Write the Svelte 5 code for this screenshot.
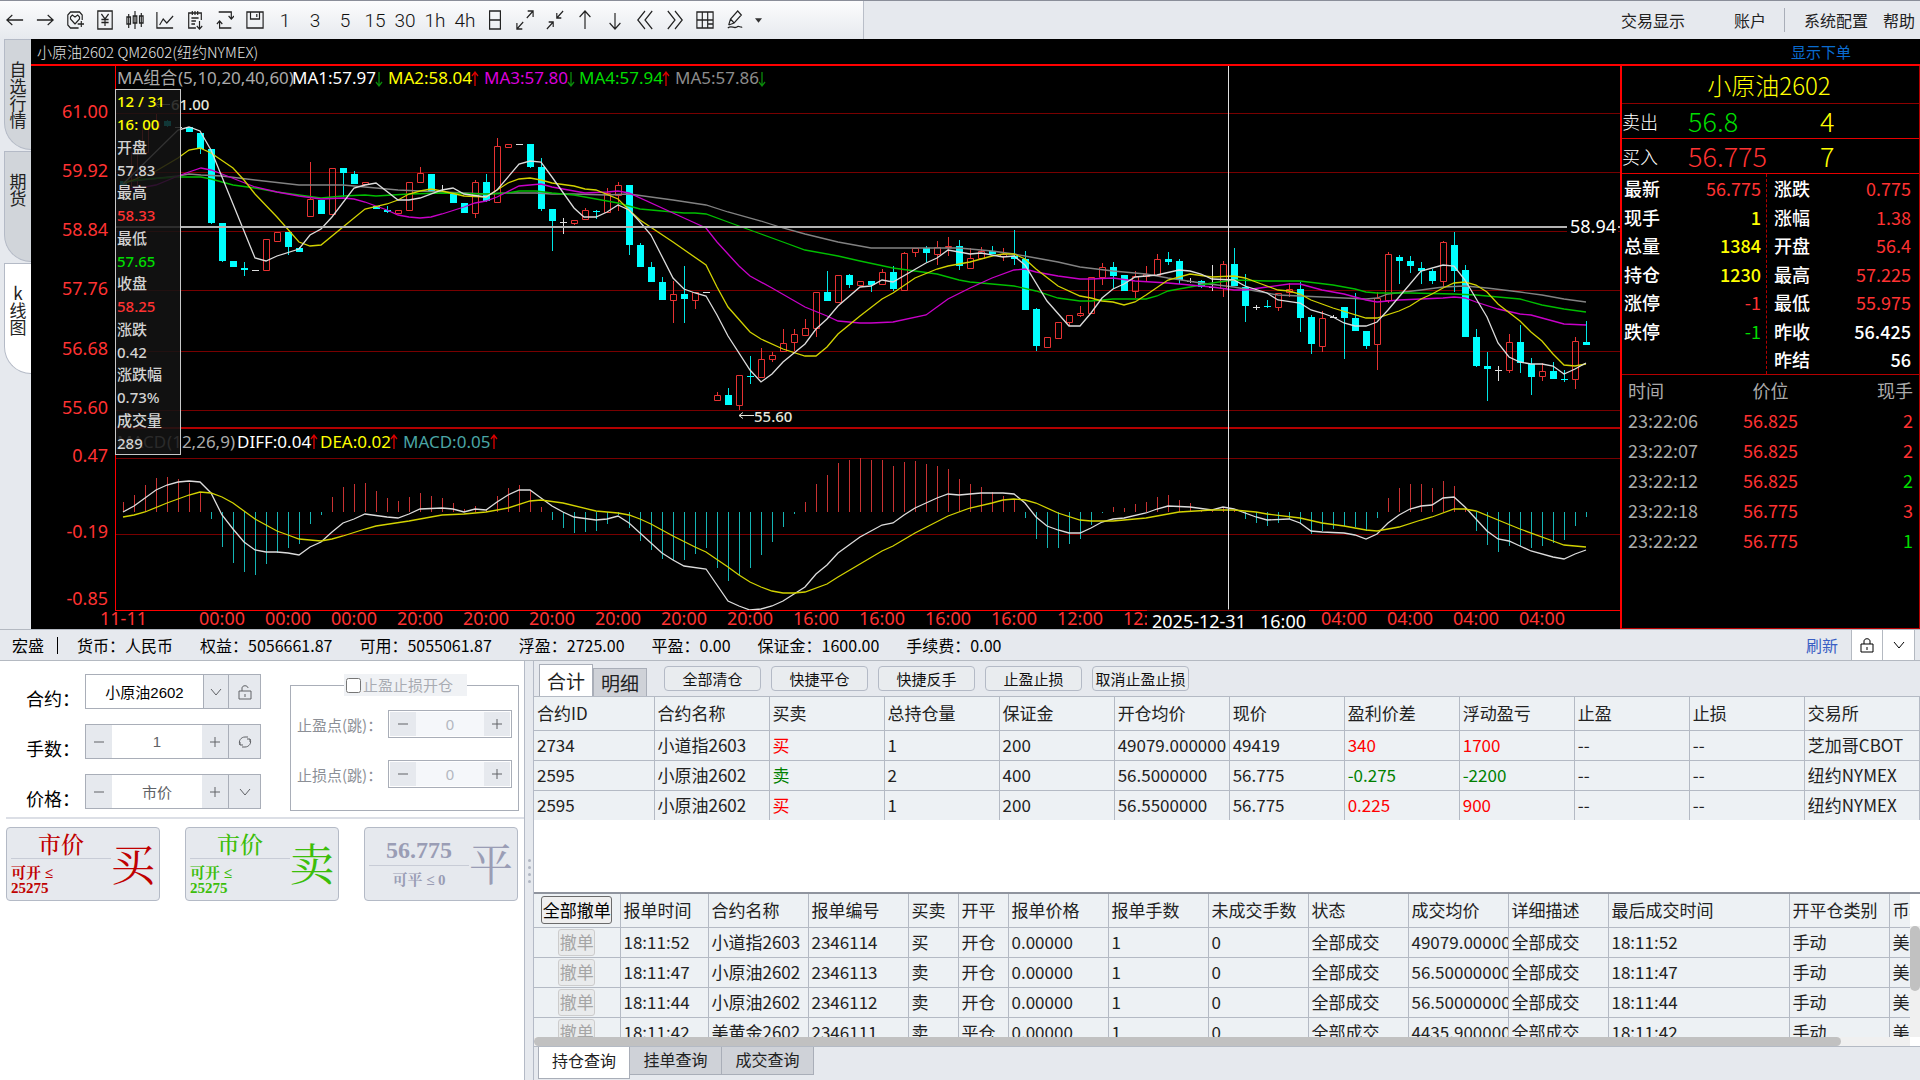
<script>
    // --- 顶部工具栏 ---
    const tools = [
        { name: '后退', d: 'M1 10H19M7 5L1 10L7 15' },
        { name: '前进', d: 'M1 10H19M13 5L19 10L13 15' },
        { name: '加自选', d: 'M14 18H5L2 15V5L5 2H15L18 5V10M10 14L5 9V7L7 5L10 7L13 5L15 7V9L10 14M13 14H20M17 11V17' },
        { name: '交易', d: 'M2 1H18V19H2ZM6 4L10 9L14 4M10 9V16M6 9.5H14M6 12.5H14' },
        { name: 'K线', d: 'M3 4V18M1 7H5V14H1ZM10 1V19M8 6H12V13H8ZM17 3V17M15 6H19V13H15Z' },
        { name: '分时', d: 'M1 2V18H19M4 15L8 9L12 13L19 6' },
        { name: '明细', d: 'M11 18H3V3H17V10M7 1V5M10 1V5M13 1V5M6 8H14M6 11H11M6 14H10M15 11V19M12 16L15 19L18 16' },
        { name: '切换', d: 'M3 2H17V9M14 6L17 9L20 6M17 18H4V11M1 14L4 11L7 14' },
        { name: '保存', d: 'M1 2H19V18H1ZM5 2V9H15V2M12 4V7' },
        { label: '1' },
        { label: '3' },
        { label: '5' },
        { label: '15' },
        { label: '30' },
        { label: '1h' },
        { label: '4h' },
        { name: '日线', d: 'M4 1H16V19H4ZM4 10H16' },
        { name: '放大', d: 'M12 8L19 1M13 1H19V7M8 12L1 19M1 13V19H7' },
        { name: '缩小', d: 'M12 8L19 1M12 3V8H17M8 12L1 19M3 12H8V17' },
        { name: '上移', d: 'M10 19V1M4 7L10 1L16 7' },
        { name: '下移', d: 'M10 3V19M4 13L10 19L16 13' },
        { name: '向左', d: 'M10 1L2 10L10 19M18 1L10 10L18 19' },
        { name: '向右', d: 'M2 1L10 10L2 19M10 1L18 10L10 19' },
        { name: '布局', d: 'M1 2H19V18H1ZM7 2V18M13 2V18M1 10H19M13 14H19' },
        { name: '画线', d: 'M3 15L5 9L13 1L17 5L9 13L3 15M5 9L9 13M2 18C6 15 9 19 12 17C14 15 16 18 18 17' }
    ];

    // --- K线数据: [类型 u涨 d跌 f平, 最高, 实体上, 实体下, 最低] ---
    const candles = [
        ['d',181,181,186,186],['u',152,152,186,190],['u',127,127,152,154],['u',114,121,127,127],['d',120,121,126,127],
        ['f',127,127,127,127],['d',127,127,132,132],['d',133,133,149,154],['d',149,149,223,224],['d',223,223,261,262],
        ['d',261,261,267,267],['d',262,268,270,276],['f',270,270,270,270],['u',239,239,270,270],['u',232,232,241,241],
        ['d',232,232,247,255],['d',247,248,252,252],['u',162,199,216,216],['d',200,200,214,214],['u',168,168,214,215],
        ['d',168,168,173,197],['d',171,174,184,184],['u',182,182,184,184],['d',206,206,209,209],['d',206,210,212,213],
        ['u',210,210,213,214],['u',182,182,210,210],['u',167,173,182,182],['d',174,174,192,192],['f',185,191,191,191],
        ['d',193,193,203,203],['d',203,203,213,213],['u',180,182,213,218],['d',174,182,201,202],['u',138,146,202,202],
        ['u',144,144,147,147],['f',144,144,144,144],['d',144,144,167,168],['d',158,167,209,211],['d',209,209,221,251],
        ['f',218,222,222,234],['u',220,220,223,225],['u',208,210,219,219],['d',210,211,212,219],['u',188,193,212,213],
        ['u',182,185,195,211],['d',185,185,245,255],['d',243,245,267,267],['d',262,267,282,282],['d',277,282,300,300],
        ['u',281,294,300,323],['d',266,294,299,323],['u',292,292,300,309],['f',292,292,292,292],['u',392,395,400,400],
        ['d',388,395,405,405],['u',375,375,405,410],['d',356,376,377,384],['u',348,359,377,377],['u',352,355,359,362],
        ['u',329,343,351,351],['u',329,334,342,351],['u',319,328,335,335],['u',292,292,328,337],['d',271,292,301,301],
        ['u',275,275,302,302],['d',274,275,285,288],['u',281,281,285,286],['d',281,281,285,292],['u',269,272,284,284],
        ['d',266,272,289,291],['u',252,253,290,291],['u',248,248,252,257],['d',246,248,253,262],['u',241,247,254,265],
        ['u',237,246,247,256],['d',240,246,266,270],['u',248,258,268,268],['u',247,251,258,258],['d',246,251,254,254],
        ['u',248,254,256,261],['d',230,256,259,265],['d',251,259,310,310],['d',308,309,346,351],['u',337,337,347,348],
        ['u',322,322,338,338],['u',315,315,322,326],['u',306,313,315,317],['u',277,277,313,313],['u',263,267,277,285],
        ['d',262,267,276,289],['d',275,275,291,291],['u',271,276,291,298],['u',266,274,276,282],['u',254,259,275,275],
        ['d',252,259,262,265],['d',259,261,280,284],['f',278,281,281,283],['d',280,281,287,288],['f',265,287,287,291],
        ['u',261,264,288,297],['d',248,264,286,286],['d',274,287,306,322],['f',305,307,307,310],['d',300,306,307,308],
        ['u',293,293,307,311],['u',283,289,292,297],['d',282,289,318,332],['d',315,317,344,354],['u',311,318,346,352],
        ['f',315,317,317,318],['d',307,307,318,359],['d',293,318,331,331],['d',331,331,346,349],['u',292,298,344,370],
        ['u',252,254,300,303],['d',255,257,261,284],['d',256,261,266,273],['d',262,268,271,284],['d',269,271,281,284],
        ['u',241,242,281,287],['d',232,245,271,292],['d',265,270,337,337],['d',329,337,366,367],['d',352,366,369,401],
        ['f',366,370,370,381],['u',334,342,370,373],['d',325,342,363,373],['d',358,364,377,395],['u',363,371,376,381],
        ['d',362,371,379,379],['d',370,379,380,382],['u',337,341,379,389],['d',321,342,345,345]
    ];

    // --- 均线 ---
    const averages = [
        { cls: 'ma5', pts: '123,182 178,176 189,174 201,175 222,176 255,180 299,185 343,185 365,187 398,190 420,191 464,193 486,194 508,193 536,193 552,194 574,194 607,195 629,194 673,200 706,205 728,212 761,221 783,228 805,234 838,242 860,246 871,248 904,248 926,248 959,248 992,251 1014,254 1036,258 1058,262 1080,267 1113,271 1146,274 1168,278 1201,283 1234,287 1256,291 1278,295 1300,296 1322,297 1344,298 1366,299 1377,298 1388,294 1421,290 1443,287 1465,286 1487,288 1520,292 1542,295 1564,299 1586,302' },
        { cls: 'ma4', pts: '123,182 145,179 178,177 189,177 201,177 211,179 233,185 255,188 277,192 299,195 321,198 343,196 365,195 376,196 409,194 442,193 486,194 508,193 519,191 536,191 552,193 574,195 596,199 618,203 640,209 662,211 684,213 695,213 706,214 728,222 761,234 783,242 805,250 838,256 860,261 893,268 915,271 937,274 959,280 970,282 992,284 1014,286 1036,291 1058,298 1080,301 1091,301 1113,299 1146,299 1157,296 1168,291 1190,287 1212,283 1234,280 1267,281 1300,281 1333,285 1355,289 1366,292 1377,293 1410,293 1454,294 1476,295 1509,298 1520,299 1542,305 1564,309 1586,312' },
        { cls: 'ma3', pts: '123,190 145,187 156,185 178,176 189,172 201,168 211,170 222,174 255,187 277,192 299,196 321,199 343,198 354,199 365,202 387,210 398,215 409,217 420,218 431,217 442,214 464,207 475,203 486,201 497,197 519,186 530,185 541,184 552,187 574,191 585,193 607,192 618,191 629,193 673,213 695,223 706,228 717,242 728,254 739,266 750,276 772,288 805,307 827,316 838,321 860,323 871,323 893,322 926,315 937,307 948,299 970,288 992,278 1014,270 1025,269 1036,272 1058,276 1080,279 1091,279 1113,278 1135,281 1168,283 1190,285 1212,287 1234,290 1245,290 1267,287 1289,284 1300,284 1322,290 1344,294 1366,300 1377,302 1399,300 1443,298 1454,297 1465,298 1476,302 1498,309 1520,314 1531,315 1542,318 1564,324 1586,325' },
        { cls: 'ma2', pts: '123,184 156,171 178,158 189,150 200,148 211,153 233,168 244,180 255,194 277,217 299,242 310,246 321,245 343,227 365,209 387,204 398,200 409,194 420,191 431,189 442,191 464,196 486,197 497,190 508,183 519,179 530,178 541,180 552,183 574,186 585,189 596,190 618,199 629,210 640,220 673,242 706,265 717,287 728,307 750,332 761,339 783,349 805,356 816,356 827,347 838,334 860,316 882,299 893,293 915,278 937,269 948,266 970,262 992,256 1003,254 1014,254 1025,259 1036,269 1058,286 1080,296 1091,298 1102,301 1113,302 1124,305 1135,302 1146,295 1168,280 1190,274 1212,277 1234,276 1245,278 1256,282 1278,290 1289,291 1300,294 1311,300 1333,308 1366,318 1377,318 1399,311 1410,306 1421,299 1432,294 1443,288 1454,283 1465,282 1476,285 1487,292 1498,304 1520,321 1531,332 1542,341 1553,354 1564,365 1575,366 1586,364' },
        { cls: 'ma1', pts: '123,184 178,130 189,127 200,131 211,150 255,258 266,261 277,256 299,249 310,235 321,229 332,217 354,188 365,185 376,183 398,200 409,200 420,198 442,190 453,188 464,194 486,197 497,190 519,164 530,161 541,162 552,177 574,208 584,217 596,217 607,212 618,205 629,210 640,222 651,235 673,278 684,289 695,293 706,296 717,315 728,336 750,370 761,382 772,374 783,362 794,353 805,344 816,329 827,319 838,306 860,287 871,286 882,280 893,282 926,263 937,258 948,250 970,254 981,253 1003,257 1014,256 1025,265 1047,301 1069,326 1080,326 1091,313 1102,298 1113,289 1124,284 1135,277 1157,275 1179,270 1190,271 1201,274 1212,279 1234,280 1245,286 1267,293 1278,300 1300,303 1311,310 1322,313 1333,317 1344,323 1355,326 1366,326 1377,322 1388,310 1399,297 1421,271 1443,265 1454,266 1465,280 1487,317 1498,343 1509,357 1520,362 1531,364 1542,364 1553,366 1564,374 1575,369 1586,363' }
    ];

    // --- MACD ---
    const macdZero = 512;
    const macd = [
        502,495,485,478,477,479,483,492,519,547,563,572,575,564,553,548,544,524,515,497,
        487,484,483,491,498,501,497,493,496,498,503,509,506,509,496,488,485,491,507,520,
        528,533,532,531,524,515,528,541,550,559,560,560,554,548,568,581,575,568,555,542,
        527,514,502,484,475,463,460,458,460,460,466,462,461,464,466,469,479,484,487,492,
        496,500,518,539,548,548,544,539,525,513,507,508,504,502,497,495,500,503,511,511,
        507,510,519,523,526,523,519,523,534,531,529,526,527,531,518,498,488,484,484,488,
        481,486,507,531,545,552,546,546,548,546,543,540,526,517
    ];
    const diffLine = '123,512 134,506 156,490 167,485 178,482 189,481 200,482 211,493 222,515 233,529 244,542 255,550 266,552 277,552 288,553 299,555 310,547 321,542 332,532 343,523 354,519 365,514 387,517 398,518 409,514 420,509 442,508 453,509 464,512 475,509 486,510 497,502 508,495 519,490 530,490 541,498 552,506 563,512 574,517 596,520 607,519 618,516 629,523 640,533 662,553 673,560 684,566 706,569 717,585 728,601 739,606 750,610 761,609 772,606 783,601 794,594 805,587 816,574 827,565 838,553 849,545 860,537 882,525 893,523 904,515 915,508 937,498 948,494 959,495 981,493 1003,493 1014,494 1025,503 1036,517 1047,526 1058,530 1069,533 1080,533 1091,528 1102,522 1113,519 1124,518 1146,513 1157,509 1168,506 1190,507 1212,510 1223,507 1234,509 1256,517 1267,520 1289,519 1300,523 1311,531 1322,532 1344,533 1355,535 1366,539 1377,534 1388,523 1399,515 1410,509 1421,506 1432,505 1443,498 1454,497 1465,507 1476,519 1487,531 1498,539 1509,541 1520,546 1531,551 1553,557 1564,559 1575,554 1586,550';
    const deaLine = '123,517 134,515 145,512 167,503 189,495 200,492 211,493 222,497 233,503 244,511 255,519 277,531 288,535 299,539 321,541 332,539 343,536 365,529 376,526 409,521 431,517 442,515 464,514 486,512 508,508 530,501 541,500 563,503 596,511 618,513 629,515 640,519 651,524 673,536 695,547 706,552 728,567 739,575 750,582 761,587 772,591 783,593 794,593 805,592 827,584 838,577 860,564 882,551 893,546 915,533 948,516 970,508 992,503 1003,500 1014,499 1025,500 1036,503 1058,513 1080,520 1091,521 1113,521 1135,519 1146,518 1179,512 1212,510 1234,510 1256,512 1267,514 1300,518 1322,523 1344,526 1366,530 1377,531 1388,529 1399,527 1421,520 1432,517 1454,509 1465,509 1476,511 1498,520 1520,529 1553,541 1564,545 1575,546 1586,547';

    const priceTicks = [['61.00', 113], ['59.92', 172], ['58.84', 231], ['57.76', 290], ['56.68', 350], ['55.60', 409]];
    const macdTicks = [['0.47', 457], ['-0.19', 533], ['-0.85', 600]];
    const timeTicks = ['00:00', '00:00', '00:00', '20:00', '20:00', '20:00', '20:00', '20:00', '20:00', '16:00', '16:00', '16:00', '16:00', '12:00', '', '', '', '04:00', '04:00', '04:00', '04:00'];

    const maLegend = [
        ['MA1:57.97', 'ma1', 292, 'down'],
        ['MA2:58.04', 'ma2', 388, 'up'],
        ['MA3:57.80', 'ma3', 484, 'down'],
        ['MA4:57.94', 'ma4', 579, 'up'],
        ['MA5:57.86', 'ma5', 675, 'down']
    ];
    const macdLegend = [
        ['DIFF:0.04', 'ma1', 237, 314],
        ['DEA:0.02', 'ma2', 320, 394],
        ['MACD:0.05', 'teal', 403, 494]
    ];

    const barX = (i) => 123 + i * 11;

    const barInfo = [
        ['12 / 31', 'yellow'], ['16: 00', 'yellow'], ['开盘', ''], ['57.83', ''], ['最高', ''], ['58.33', 'red'],
        ['最低', ''], ['57.65', 'green'], ['收盘', ''], ['58.25', 'red'], ['涨跌', ''], ['0.42', ''],
        ['涨跌幅', ''], ['0.73%', ''], ['成交量', ''], ['289', '']
    ];

    // --- 行情面板 ---
    const quotesLeft = [['最新', '56.775', 'red'], ['现手', '1', 'yellow'], ['总量', '1384', 'yellow'], ['持仓', '1230', 'yellow'], ['涨停', '-1', 'red'], ['跌停', '-1', 'green']];
    const quotesRight = [['涨跌', '0.775', 'red'], ['涨幅', '1.38', 'red'], ['开盘', '56.4', 'red'], ['最高', '57.225', 'red'], ['最低', '55.975', 'red'], ['昨收', '56.425', ''], ['昨结', '56', '']];
    const ticks = [
        ['23:22:06', '56.825', '2', 'red'],
        ['23:22:07', '56.825', '2', 'red'],
        ['23:22:12', '56.825', '2', 'green'],
        ['23:22:18', '56.775', '3', 'red'],
        ['23:22:22', '56.775', '1', 'green']
    ];

    // --- 账户资金 ---
    const funds = ['货币：人民币', '权益：5056661.87', '可用：5055061.87', '浮盈：2725.00', '平盈：0.00', '保证金：1600.00', '手续费：0.00'];

    // --- 下单 ---
    let contract = $state('小原油2602');
    let lots = $state(1);
    let price = $state('市价');
    let stopOpen = $state(false);

    // --- 持仓 ---
    let view = $state('合计');
    const quickActions = ['全部清仓', '快捷平仓', '快捷反手', '止盈止损', '取消止盈止损'];
    const positionCols = ['合约ID', '合约名称', '买卖', '总持仓量', '保证金', '开仓均价', '现价', '盈利价差', '浮动盈亏', '止盈', '止损', '交易所'];
    const positions = [
        ['2734', '小道指2603', '买', '1', '200', '49079.000000', '49419', '340', '1700', '--', '--', '芝加哥CBOT'],
        ['2595', '小原油2602', '卖', '2', '400', '56.5000000', '56.775', '-0.275', '-2200', '--', '--', '纽约NYMEX'],
        ['2595', '小原油2602', '买', '1', '200', '56.5500000', '56.775', '0.225', '900', '--', '--', '纽约NYMEX']
    ];

    function cellClass(row, i) {
        if (i === 2) return row[2] === '买' ? 'rise' : 'fall';
        if (i === 7 || i === 8) return row[i].startsWith('-') ? 'fall' : 'rise';
        return '';
    }

    // --- 委托 ---
    const orderCols = [
        ['报单时间', 88], ['合约名称', 100], ['报单编号', 100], ['买卖', 50], ['开平', 50], ['报单价格', 100], ['报单手数', 100],
        ['未成交手数', 100], ['状态', 100], ['成交均价', 100], ['详细描述', 100], ['最后成交时间', 181], ['开平仓类别', 100], ['币种', 100]
    ];
    const orders = [
        ['18:11:52', '小道指2603', '2346114', '买', '开仓', '0.00000', '1', '0', '全部成交', '49079.000000', '全部成交', '18:11:52', '手动', '美元'],
        ['18:11:47', '小原油2602', '2346113', '卖', '开仓', '0.00000', '1', '0', '全部成交', '56.50000000', '全部成交', '18:11:47', '手动', '美元'],
        ['18:11:44', '小原油2602', '2346112', '卖', '开仓', '0.00000', '1', '0', '全部成交', '56.50000000', '全部成交', '18:11:44', '手动', '美元'],
        ['18:11:42', '美黄金2602', '2346111', '卖', '平仓', '0.00000', '1', '0', '全部成交', '4435.900000', '全部成交', '18:11:42', '手动', '美元']
    ];
    let query = $state('持仓查询');
    const queries = ['持仓查询', '挂单查询', '成交查询'];
</script>

{#snippet chevron()}
    <svg class="glyph" viewBox="0 0 16 16"><path d="M3 5L8 11L13 5" /></svg>
{/snippet}

{#snippet lock(open)}
    <svg class="glyph" viewBox="0 0 16 16"><path d={open ? 'M2 7H14V15H2ZM5 7V4C5 1 11 1 11 4M8 10V13' : 'M2 7H14V15H2ZM5 7V4C5 1 11 1 11 4V7M8 10V13'} /></svg>
{/snippet}

{#snippet arrow(x, y, dir)}
    <path class="arrow {dir}" d={dir === 'up' ? `M${x} ${y + 7}V${y - 7}M${x - 3} ${y - 3}L${x} ${y - 7}L${x + 3} ${y - 3}` : `M${x} ${y - 7}V${y + 7}M${x - 3} ${y + 3}L${x} ${y + 7}L${x + 3} ${y + 3}`} />
{/snippet}

<div class="app">
    <header class="topbar">
        <div class="tools">
            {#each tools as t}
                {#if t.label}
                    <button class="tool period">{t.label}</button>
                {:else}
                    <button class="tool" aria-label={t.name}>
                        <svg viewBox="0 0 20 20" preserveAspectRatio="none"><path d={t.d} /></svg>
                    </button>
                {/if}
            {/each}
            <button class="more" aria-label="更多"><svg viewBox="0 0 8 5"><path d="M0 0H8L4 5Z" /></svg></button>
        </div>
        <nav class="menu">
            <button class="show">交易显示</button>
            <button>账户</button>
            <i class="bar"></i>
            <button>系统配置</button>
            <button class="help">帮助</button>
        </nav>
    </header>

    <div class="market">
        <div class="side-tabs">
            <button class="side-tab">自选行情</button>
            <button class="side-tab">期货</button>
            <button class="side-tab active">k线图</button>
        </div>

        <div class="board">
            <div class="board-title">
                <span>小原油2602 QM2602(纽约NYMEX)</span>
                <a href="#order">显示下单</a>
            </div>
            <div class="board-body">
                <div class="chart">
                    <svg viewBox="31 66 1589 563">
                        <!-- 网格 -->
                        {#each [113, 172, 231, 290, 351, 410, 458, 534] as y}
                            <line class="grid" x1="116" x2="1620" y1={y + 0.5} y2={y + 0.5} />
                        {/each}
                        <line class="split" x1="116" x2="1620" y1="428" y2="428" />

                        {#each priceTicks as [label, y]}
                            <text class="axis" x="108" y={y + 5} text-anchor="end">{label}</text>
                        {/each}
                        {#each macdTicks as [label, y]}
                            <text class="axis" x="108" y={y + 5} text-anchor="end">{label}</text>
                        {/each}
                        <text class="axis" x="100" y="625">11-11</text>
                        {#each timeTicks as label, i}
                            {#if label}
                                <text class="axis" x={222 + i * 66} y="625" text-anchor="middle">{label}</text>
                            {/if}
                        {/each}
                        <text class="axis" x="1123" y="625">12:</text>

                        <!-- 蜡烛 -->
                        {#each candles as [kind, high, top, bottom, low], i}
                            {@const x = barX(i)}
                            {#if kind === 'u'}
                                <path class="candle up" d="M{x + 0.5} {high}V{top}M{x + 0.5} {bottom}V{low}M{x - 2.5} {top + 0.5}H{x + 3.5}V{Math.max(bottom, top + 1) + 0.5}H{x - 2.5}Z" />
                            {:else if kind === 'd'}
                                <path class="candle down" d="M{x + 0.5} {high}V{low}" />
                                <rect class="down-body" x={x - 3} y={top} width="7" height={Math.max(bottom - top, 1)} />
                            {:else}
                                <path class="candle flat" d="M{x + 0.5} {high}V{low}M{x - 3} {top + 0.5}H{x + 4}" />
                            {/if}
                        {/each}
                        {#each averages as line}
                            <polyline class="line {line.cls}" points={line.pts} />
                        {/each}

                        <!-- MACD -->
                        {#each macd as y, i}
                            <line class={y < macdZero ? 'macd up' : 'macd down'} x1={barX(i) + 0.5} x2={barX(i) + 0.5} y1={macdZero} y2={y} />
                        {/each}
                        <polyline class="line ma1" points={diffLine} />
                        <polyline class="line ma2" points={deaLine} />

                        <line class="frame" x1="115.5" x2="115.5" y1="66" y2="611" />
                        <line class="frame" x1="115" x2="1620" y1="610.5" y2="610.5" />

                        <!-- 指标说明 -->
                        <text class="legend dim" x="117" y="84">MA组合</text>
                        <text class="legend dim" x="178" y="84">(5,10,20,40,60)</text>
                        {#each maLegend as [label, cls, x, dir]}
                            <text class="legend {cls}" {x} y="84">{label}</text>
                            {@render arrow(x + 87, 79, dir)}
                        {/each}
                        <text class="legend dim" x="117" y="448">MACD</text>
                        <text class="legend dim" x="235" y="448" text-anchor="end">(12,26,9)</text>
                        {#each macdLegend as [label, cls, x, ax]}
                            <text class="legend {cls}" {x} y="448">{label}</text>
                            {@render arrow(ax, 442, 'up')}
                        {/each}

                        <path class="note-arrow" d="M155 104.5H170M159 101.5L155 104.5L159 107.5" />
                        <text class="note" x="171" y="110">61.00</text>
                        <path class="note-arrow" d="M739 415.5H754M743 412.5L739 415.5L743 418.5" />
                        <text class="note" x="754" y="422">55.60</text>

                        <!-- 十字光标 -->
                        <line class="cross" x1="116" x2="1620" y1="227" y2="227" />
                        <line class="cross thin" x1="1228.5" x2="1228.5" y1="66" y2="610" />
                        <rect x="1567" y="216" width="51" height="22" />
                        <text class="axis white" x="1570" y="233">58.94</text>
                        <rect x="1147" y="609" width="162" height="20" fill-opacity="0.5" />
                        <rect x="1147" y="612" width="162" height="17" />
                        <text class="axis white" x="1152" y="628">2025-12-31</text>
                        <text class="axis white" x="1260" y="628">16:00</text>
                    </svg>
                    <div class="bar-info">
                        {#each barInfo as [text, cls]}
                            <span class={cls}>{text}</span>
                        {/each}
                    </div>
                </div>

                <aside class="quote">
                    <h2>小原油2602</h2>
                    <div class="deal"><span>卖出</span><b class="green">56.8</b><b class="yellow">4</b></div>
                    <div class="deal"><span>买入</span><b class="red">56.775</b><b class="yellow">7</b></div>
                    <div class="details">
                        <dl>
                            {#each quotesLeft as [name, value, cls]}
                                <div><dt>{name}</dt><dd class={cls}>{value}</dd></div>
                            {/each}
                        </dl>
                        <dl>
                            {#each quotesRight as [name, value, cls]}
                                <div><dt>{name}</dt><dd class={cls}>{value}</dd></div>
                            {/each}
                        </dl>
                    </div>
                    <table class="ticks">
                        <thead>
                            <tr><th>时间</th><th>价位</th><th>现手</th></tr>
                        </thead>
                        <tbody>
                            {#each ticks as [time, value, count, cls]}
                                <tr><td>{time}</td><td class="red">{value}</td><td class={cls}>{count}</td></tr>
                            {/each}
                        </tbody>
                    </table>
                </aside>
            </div>
        </div>
    </div>

    <div class="account">
        <span class="broker">宏盛</span>
        <div class="funds">
            {#each funds as f}
                <span>{f}</span>
            {/each}
        </div>
        <button class="refresh">刷新</button>
        <button class="square" aria-label="锁定">{@render lock(false)}</button>
        <button class="square" aria-label="收起">{@render chevron()}</button>
    </div>

    <div class="trade">
        <section class="order-form">
            <div class="form-top">
                <div class="fields">
                    <div class="field">
                        <label for="contract">合约：</label>
                        <div class="box">
                            <input id="contract" class="strong" type="text" bind:value={contract} />
                            <button class="line-left pick" aria-label="选择合约">{@render chevron()}</button>
                            <button class="line-left end" aria-label="锁定合约">{@render lock(true)}</button>
                        </div>
                    </div>
                    <div class="field">
                        <label for="lots">手数：</label>
                        <div class="box">
                            <button class="step" aria-label="减少手数" onclick={() => lots--}><svg class="glyph" viewBox="0 0 16 16"><path d="M3 8H13" /></svg></button>
                            <input id="lots" type="text" bind:value={lots} />
                            <button class="step" aria-label="增加手数" onclick={() => lots++}><svg class="glyph" viewBox="0 0 16 16"><path d="M3 8H13M8 3V13" /></svg></button>
                            <button class="line-left end" aria-label="重置手数" onclick={() => (lots = 1)}>
                                <svg class="glyph" viewBox="0 0 16 16"><path d="M3 11C1 7 4 3 8 3H11M13 5C15 9 12 13 8 13H5M3 8V11H6M13 8V5H10" /></svg>
                            </button>
                        </div>
                    </div>
                    <div class="field">
                        <label for="price">价格：</label>
                        <div class="box">
                            <button class="step" aria-label="降低价格"><svg class="glyph" viewBox="0 0 16 16"><path d="M3 8H13" /></svg></button>
                            <input id="price" type="text" bind:value={price} />
                            <button class="step" aria-label="提高价格"><svg class="glyph" viewBox="0 0 16 16"><path d="M3 8H13M8 3V13" /></svg></button>
                            <button class="line-left end" aria-label="价格类型">{@render chevron()}</button>
                        </div>
                    </div>
                </div>

                <fieldset class="stops">
                    <legend><label><input type="checkbox" bind:checked={stopOpen} />止盈止损开仓</label></legend>
                    {#each [['tp', '止盈点(跳)：'], ['sl', '止损点(跳)：']] as [id, name]}
                        <div class="stop">
                            <label for={id}>{name}</label>
                            <div class="box small">
                                <button class="step" aria-label="减少" disabled={!stopOpen}><svg class="glyph" viewBox="0 0 16 16"><path d="M3 8H13" /></svg></button>
                                <input {id} type="text" value="0" disabled={!stopOpen} />
                                <button class="step" aria-label="增加" disabled={!stopOpen}><svg class="glyph" viewBox="0 0 16 16"><path d="M3 8H13M8 3V13" /></svg></button>
                            </div>
                        </div>
                    {/each}
                </fieldset>
            </div>

            <div class="actions">
                <button class="action buy">
                    <span class="info"><span class="top">市价</span><span class="limit">可开 ≤<br />25275</span></span>
                    <span class="word">买</span>
                </button>
                <button class="action sell">
                    <span class="info"><span class="top">市价</span><span class="limit">可开 ≤<br />25275</span></span>
                    <span class="word">卖</span>
                </button>
                <button class="action close">
                    <span class="info"><span class="top">56.775</span><span class="limit">可平 ≤ 0</span></span>
                    <span class="word">平</span>
                </button>
            </div>
        </section>

        <div class="splitter"><i></i><i></i><i></i><i></i></div>

        <section class="records">
            <div class="position-bar">
                <div class="view-tabs">
                    {#each ['合计', '明细'] as v}
                        <button class:active={view === v} onclick={() => (view = v)}>{v}</button>
                    {/each}
                </div>
                <div class="quick">
                    {#each quickActions as a}
                        <button>{a}</button>
                    {/each}
                </div>
            </div>

            <div class="positions">
                <table class="data">
                    <colgroup><col class="first" />{#each positionCols.slice(1) as _}<col />{/each}</colgroup>
                    <thead>
                        <tr>{#each positionCols as c}<th>{c}</th>{/each}</tr>
                    </thead>
                    <tbody>
                        {#each positions as row}
                            <tr>{#each row as cell, i}<td class={cellClass(row, i)}>{cell}</td>{/each}</tr>
                        {/each}
                    </tbody>
                </table>
            </div>

            <div class="orders">
                <div class="clip">
                    <table class="data wide">
                        <colgroup><col style="width: 86px" />{#each orderCols as [, w]}<col style="width: {w}px" />{/each}</colgroup>
                        <thead>
                            <tr>
                                <th class="center"><button class="cancel-all">全部撤单</button></th>
                                {#each orderCols as [name]}<th>{name}</th>{/each}
                            </tr>
                        </thead>
                        <tbody>
                            {#each orders as row}
                                <tr>
                                    <td class="center"><button class="cancel" disabled>撤单</button></td>
                                    {#each row as cell}<td>{cell}</td>{/each}
                                </tr>
                            {/each}
                        </tbody>
                    </table>
                </div>
                <div class="vbar"><i></i></div>
                <div class="hbar"><i></i></div>
            </div>

            <div class="query-tabs">
                {#each queries as q}
                    <button class:active={query === q} onclick={() => (query = q)}>{q}</button>
                {/each}
            </div>
        </section>
    </div>
</div>

<style>
    :global(body) { margin: 0; }
    .app {
        display: flex;
        flex-direction: column;
        height: 100vh;
        overflow: hidden;
        background: #e6e9ee;
        font-family: "Noto Sans CJK SC", "Noto Sans", sans-serif;
        font-size: 16px;
        color: #000;
    }
    .app *, .app { box-sizing: border-box; }
    button, input { font: inherit; color: inherit; margin: 0; padding: 0; border: 0; background: none; }
    button { cursor: pointer; }
    button:disabled { cursor: default; }
    .red { color: #ff3232; }
    .green { color: #00dc00; }
    .yellow { color: #ffff00; }

    /* 工具栏 */
    .topbar { display: flex; justify-content: space-between; height: 39px; flex: none; border-top: 1px solid #8a8e99; }
    .tools { display: flex; align-items: center; width: 864px; border-right: 1px solid #b9bec8; background: linear-gradient(#fcfcfd, #e6e9ee); }
    .tool { display: flex; align-items: center; justify-content: center; width: 30px; height: 38px; }
    .tool svg { width: 18px; height: 20px; fill: none; stroke: #222; stroke-width: 1.3; }
    .period { font-family: "Roboto", sans-serif; font-weight: 300; font-size: 19px; color: #111; }
    .more { width: 16px; }
    .more svg { width: 7px; height: 5px; display: block; margin: 0 auto; fill: #333; }
    .menu { display: flex; align-items: center; padding: 0 5px 1px 0; color: #222; }
    .menu .show { margin-right: 49px; }
    .menu .bar { width: 1px; height: 24px; margin: 0 19px 0 18px; background: #a9aeb8; }
    .menu .help { margin-left: 15px; }

    /* 行情区 */
    .market { display: flex; flex: none; }
    .side-tabs { width: 31px; padding-left: 4px; flex: none; }
    .side-tab {
        display: flex;
        align-items: flex-start;
        width: 27px;
        height: 111px;
        margin-bottom: 1px;
        border: 1px solid #b4bac6;
        border-right: 0;
        border-radius: 0 0 0 27px;
        background: #d1d5da;
        padding: 20px 4px 0 4px;
        font-size: 17px;
        line-height: 17px;
        color: #222;
        overflow-wrap: anywhere;
        text-align: center;
    }
    .side-tab.active { background: #fff; }
    .board { flex: 1; min-width: 0; background: #000; }
    .board-title { display: flex; justify-content: space-between; align-items: center; height: 27px; padding: 0 69px 0 6px; border-bottom: 2px solid #f00; color: #e6e6e6; font-size: 15px; font-weight: 300; }
    .board-title a { color: #0a6cd0; text-decoration: none; font-weight: 400; }
    .board-body { display: flex; }
    .chart { position: relative; flex: 1; min-width: 0; }
    .chart > svg { display: block; width: 100%; font-family: "Noto Sans", "Noto Sans CJK SC", sans-serif; }
    .grid { stroke: #780000; }
    .split { stroke: #b40000; stroke-width: 2; }
    .frame { stroke: #f00; }
    .axis { fill: #ff3232; font-size: 18px; }
    .axis.white { fill: #fff; }
    .legend { font-size: 17px; }
    .legend.ma1 { fill: #fff; }
    .legend.ma2 { fill: #ff0; }
    .legend.ma3 { fill: #dc00dc; }
    .legend.ma4 { fill: #00dc00; }
    .legend.ma5 { fill: #8c8c8c; }
    .legend.dim { fill: #aaa; }
    .legend.teal { fill: #4aa5a5; }
    .arrow { fill: none; stroke-width: 1.3; }
    .arrow.up { stroke: #e00000; }
    .arrow.down { stroke: #0a8a0a; }
    .candle { fill: none; }
    .candle.up { stroke: #e63232; }
    .candle.down { stroke: #00e6e6; }
    .candle.flat { stroke: #ddd; }
    .down-body { fill: #0ff; }
    .line { fill: none; stroke-width: 1.3; }
    .line.ma1 { stroke: #dcdcdc; }
    .line.ma2 { stroke: #d2d200; }
    .line.ma3 { stroke: #c800c8; }
    .line.ma4 { stroke: #00be00; }
    .line.ma5 { stroke: #828282; }
    .macd.up { stroke: #c83232; }
    .macd.down { stroke: #14b4b4; }
    .note { fill: #e6e6dc; font-size: 15px; font-weight: 500; }
    .note-arrow { fill: none; stroke: #e6e6dc; }
    .cross { stroke: #b4b4b4; stroke-width: 2; }
    .cross.thin { stroke: #e0e0e0; stroke-width: 1; }
    .bar-info {
        position: absolute;
        left: 84px;
        top: 23px;
        width: 66px;
        height: 366px;
        padding-left: 1px;
        display: grid;
        grid-auto-rows: 1fr;
        align-items: center;
        border: 1px solid #c8c8c8;
        background: rgba(20, 20, 20, 0.85);
        color: #d2d2d2;
        font-family: "Noto Sans", "Noto Sans CJK SC", sans-serif;
        font-size: 15px;
        font-weight: 500;
        line-height: 20px;
    }

    .quote { width: 300px; flex: none; border: 1px solid #b40000; border-width: 0 1px 1px 2px; border-left-color: #f00; font-size: 18px; color: #fff; }
    .quote h2 { margin: 0; height: 38px; padding-right: 3px; line-height: 38px; font-size: 24px; font-weight: 300; color: #ff0; text-align: center; border-bottom: 1px solid #8c0000; }
    .deal { display: grid; grid-template-columns: 66px 132px 1fr; align-items: center; height: 35px; border-bottom: 1px solid #e60000; font-weight: 300; }
    .deal b { font-size: 27px; line-height: 34px; font-weight: 300; }
    .details { display: grid; grid-template-columns: 145px 1fr; height: 201px; border-bottom: 1px solid #b40000; font-weight: 500; }
    dl { margin: 0; padding: 0 8px 0 7px; display: grid; grid-template-rows: repeat(7, 1fr); }
    dl:first-child { padding: 0 5px 0 2px; border-right: 1px dashed #b40000; }
    dl div { display: flex; justify-content: space-between; line-height: 28px; }
    dd { margin: 0; }
    .details .red, .details .green { font-weight: 400; }
    .ticks { width: 100%; border-collapse: collapse; color: #aaa; }
    .ticks th, .ticks td { width: 33%; height: 30px; padding: 0 6px; font-weight: 400; line-height: 30px; text-align: center; }
    .ticks tr > :first-child { text-align: left; }
    .ticks tr > :last-child { text-align: right; }

    /* 账户栏 */
    .account { display: flex; align-items: center; height: 32px; flex: none; padding: 0 5px 0 12px; border: 1px solid #b4b9c1; border-width: 1px 0; }
    .broker { padding-right: 13px; border-right: 1px solid #000; line-height: 17px; margin-right: 19px; }
    .funds { display: flex; flex: 1; gap: 27px; }
    .refresh { color: #3a5fc4; margin-right: 13px; }
    .square { display: flex; align-items: center; justify-content: center; width: 32px; height: 30px; background: #fff; border: 1px solid #b4b9c1; border-width: 0 1px; }
    .square + .square { border-left: 0; }
    .glyph { display: block; width: 16px; height: 16px; margin: auto; fill: none; stroke: currentColor; stroke-width: 1; }

    /* 下单区 */
    .trade { display: flex; flex: 1; min-height: 0; }
    .order-form { width: 524px; flex: none; background: #fff; }
    .form-top { display: flex; gap: 29px; margin-left: 6px; padding-top: 13px; height: 158px; border-bottom: 2px solid #dcdfe6; }
    .fields { display: grid; gap: 15px; align-content: start; padding-left: 20px; }
    .field { display: flex; width: 235px; }
    .field label { width: 59px; padding-top: 11px; line-height: 26px; font-size: 18px; height: 35px; }
    .box { display: flex; flex: 1; min-width: 0; height: 35px; border: 1px solid #a9aeb8; background: #fff; color: #606266; }
    .box input { flex: 1; width: 40px; min-width: 0; text-align: center; font-family: "Liberation Sans", "Noto Sans CJK SC", sans-serif; font-size: 15px; outline: 0; }
    .box input.strong { color: #000; }
    .box button { background: #e6e9ee; }
    .box .step { width: 26px; }
    .box .pick { width: 25px; }
    .box .end { width: 32px; }
    .line-left { border-left: 1px solid #a9aeb8; }
    .stops { width: 229px; min-width: 0; height: 137px; margin: 0; padding: 14px 6px 0 6px; border: 1px solid #a9aeb8; font-size: 15px; color: #8c8f96; }
    .stops legend { margin-left: 47px; padding: 0 14px 0 2px; background: #f0f2f5; line-height: 22px; color: #a8abb2; }
    .stops legend label { display: flex; align-items: center; gap: 2px; }
    .stops legend input { width: 15px; height: 15px; }
    .stop { display: flex; align-items: center; height: 28px; margin-bottom: 22px; }
    .stop label { width: 91px; white-space: nowrap; }
    .box.small { height: 28px; border-color: #a9aeb8; padding: 1px; }
    .box.small input { background: #f5f7fa; color: #b4b8c0; }

    .actions { display: flex; gap: 25px; padding: 8px 6px; }
    .action { display: flex; flex: 1; height: 74px; padding: 4px; border: 1px solid #b4bac6; border-radius: 4px; background: #e6e9ee; font-family: "Noto Serif CJK SC", "Liberation Serif", "Noto Sans CJK SC", serif; }
    .info { display: flex; flex-direction: column; width: 100px; }
    .top { height: 27px; line-height: 24px; font-size: 23px; border-bottom: 1px solid #c8ccd6; font-weight: 500; }
    .limit { padding-top: 7px; font-family: "Liberation Serif", "Noto Serif CJK SC", "Noto Sans CJK SC", serif; font-size: 15px; line-height: 15px; font-weight: 700; text-align: left; word-spacing: 0; }
    .word { flex: 1; font-size: 44px; line-height: 60px; text-align: center; }
    .buy { color: #c00000; }
    .sell { color: #3cbe0a; }
    .close { color: #9a9db5; }
    .close .top { height: 34px; padding-top: 6px; font-family: "Liberation Serif", serif; font-weight: 700; font-size: 24px; }
    .close .limit { text-align: center; }

    .splitter { width: 10px; flex: none; display: flex; flex-direction: column; align-items: center; gap: 4px; padding-top: 198px; border: 1px solid #b4bac6; border-width: 0 1px; }
    .splitter i { width: 3px; height: 3px; border-radius: 50%; background: #b0b6c2; }

    /* 持仓与委托 */
    .records { flex: 1; min-width: 0; display: flex; flex-direction: column; }
    .position-bar { display: flex; height: 35px; padding-left: 5px; gap: 17px; flex: none; }
    .view-tabs { display: flex; align-items: flex-end; }
    .view-tabs button { width: 54px; height: 28px; border: 1px solid #a9aeb8; border-bottom: 0; background: #cfd2d8; font-size: 19px; line-height: 27px; color: #222; }
    .view-tabs button.active { height: 32px; background: #fff; }
    .quick { display: flex; gap: 10px; padding-top: 5px; }
    .quick button { width: 97px; height: 25px; border: 1px solid #b4bac6; border-radius: 4px; background: #e9ecef; font-size: 15px; line-height: 22px; color: #111; }

    .positions { height: 196px; flex: none; background: #fff; border-top: 1px solid #b4bac4; }
    .data { width: 100%; border-collapse: collapse; table-layout: fixed; background: #edf1f4; font-size: 17px; line-height: 24px; color: #222; }
    .data th, .data td { height: 30px; padding: 0 0 0 3px; font-weight: 400; text-align: left; white-space: nowrap; overflow: hidden; border-right: 1px solid #b4bac4; border-top: 1px solid #b4bac4; }
    .data th { height: 33px; border-top: 0; }
    .data .first { width: 120px; }
    .data .rise { color: #f00; }
    .data .fall { color: #008000; }
    .data .center { text-align: center; padding: 0; }
    .data.wide { width: 1455px; }
    .orders { display: grid; grid-template-columns: 1fr 10px; grid-template-rows: 1fr 9px; height: 154px; flex: none; border-top: 2px solid #8f949e; background: #fff; }
    .clip { overflow: hidden; grid-row: 1; }
    .cancel-all { width: 71px; height: 28px; border: 1px solid #6b6b6b; border-radius: 3px; background: #efefef; color: #000; line-height: 24px; }
    .cancel { width: 37px; height: 27px; border: 1px solid #ccc; border-radius: 3px; background: #e9ebec; color: #a5a5a5; line-height: 24px; display: block; margin: 0 auto; }
    .vbar { margin-top: 32px; background: #f0f0f0; }
    .vbar i { display: block; height: 65px; border-radius: 5px; background: #c1c1c1; }
    .hbar { background: #f0f0f0; }
    .hbar i { display: block; width: 95%; height: 9px; border-radius: 5px; background: #c1c1c1; }
    .query-tabs { display: flex; align-items: flex-start; flex: 1; padding-left: 4px; border-top: 1px solid #b4bac4; }
    .query-tabs button { width: 92px; height: 28px; padding-bottom: 4px; border: 1px solid #a9aeb8; border-top: 0; border-left: 0; background: #cfd2d8; color: #222; line-height: 22px; }
    .query-tabs button.active { height: 32px; padding-bottom: 6px; background: #fff; border-left: 1px solid #a9aeb8; }
</style>
